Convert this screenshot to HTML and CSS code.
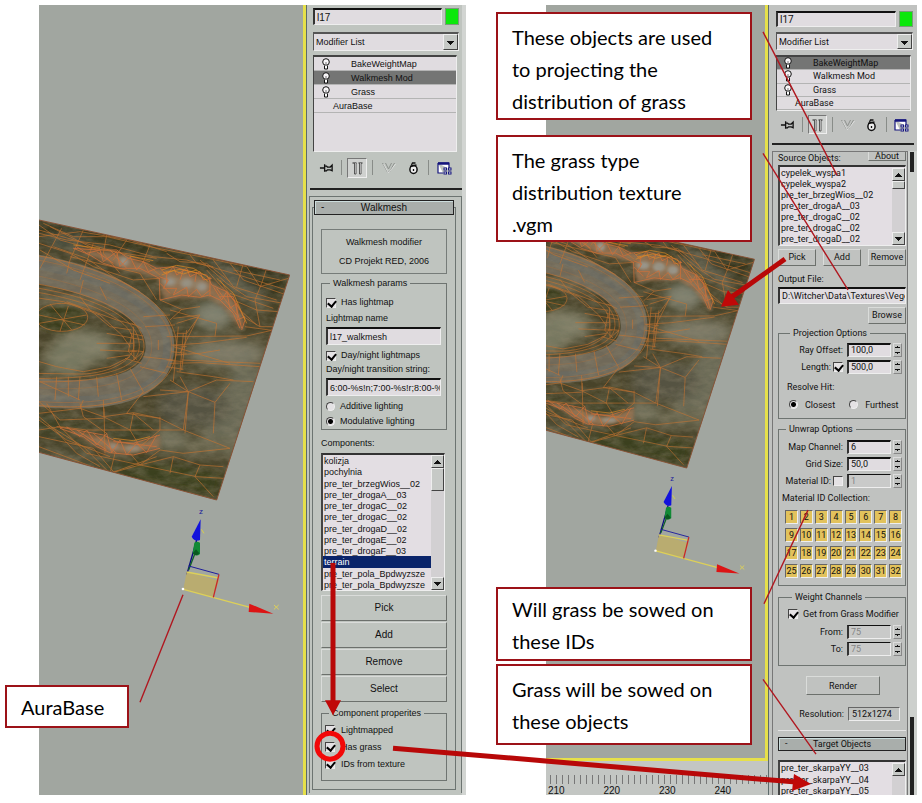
FILE: index.html
```html
<!DOCTYPE html>
<html lang="en">
<head>
<meta charset="utf-8">
<title>Grass modifier setup</title>
<link rel="stylesheet" href="styles.css">
</head>
<body>
<svg class="defs" aria-hidden="true">
  <defs>
    <filter id="soft" x="-40%" y="-40%" width="180%" height="180%"><feGaussianBlur stdDeviation="18"/></filter>
    <filter id="softer" x="-30%" y="-30%" width="160%" height="160%"><feGaussianBlur stdDeviation="6"/></filter>
    <filter id="grain" x="0" y="0" width="100%" height="100%">
      <feTurbulence type="fractalNoise" baseFrequency="0.025 0.05" numOctaves="4" seed="7"/>
      <feColorMatrix values="0 0 0 0 .3  0 0 0 0 .26  0 0 0 0 .17  2 0 0 0 -.6"/>
    </filter>
    <clipPath id="land"><path d="M100 57 L869 225 L650 900 L100 752Z"/></clipPath>
    <symbol id="bulb" viewBox="0 0 10 12">
      <circle cx="5" cy="4" r="3.3" fill="#f8f6f8" stroke="#111"/>
      <path d="M3.5 7.5V11H6.5V7.5" fill="#fff" stroke="#111"/><path d="M5 4V8" stroke="#555" stroke-width=".8"/>
    </symbol>
    <symbol id="pin" viewBox="0 0 16 14"><path d="M1 7H6M6 3V11M6 5H8L9 6H12L14 4V10L12 9H9L8 10H6" fill="none" stroke="#111" stroke-width="1.4"/></symbol>
    <symbol id="tube" viewBox="0 0 14 14"><path d="M2 2H6M8 2H12" stroke="#222" stroke-width="1.2"/><path d="M4 2V13H5.500V2M9 2V13H10.500V2" fill="#fff" stroke="#333" stroke-width=".8"/></symbol>
    <symbol id="unique" viewBox="0 0 14 14"><path d="M1 2L6 11H8L13 2M4 2L7 8L10 2" fill="none" stroke="#8c908c"/><path d="M2 3L7 12L14 3" fill="none" stroke="#eee" stroke-width=".7"/></symbol>
    <symbol id="trash" viewBox="0 0 12 14"><ellipse cx="6" cy="8.500" rx="3.600" ry="4" fill="#eee" stroke="#111" stroke-width="1.500"/><path d="M2.500 5.500L9 4M4 4L5 2H8M6 8V10" fill="none" stroke="#111" stroke-width="1.300"/></symbol>
    <symbol id="sets" viewBox="0 0 15 14"><path d="M1 2H12V8M1 2V12H6" fill="#fff" stroke="#14147c" stroke-width="1.200"/><path d="M1 2.500H12" stroke="#14147c" stroke-width="2.500"/><rect x="7" y="7" width="2.500" height="2" fill="#fff" stroke="#14147c"/><rect x="11.500" y="7" width="2.500" height="2" fill="#fff" stroke="#14147c"/><rect x="7" y="11" width="2.500" height="2" fill="#fff" stroke="#14147c"/><rect x="11.500" y="11" width="2.500" height="2" fill="#fff" stroke="#14147c"/></symbol>

    <g id="scene">
      <g transform="translate(0 200) scale(.33333)">
        <g clip-path="url(#land)">
          <rect x="90" y="50" width="800" height="860" fill="#484329"/>
          <g filter="url(#soft)">
            <path d="M100 50L860 210L840 300L600 190L100 110Z" fill="#36351c"/>
            <ellipse cx="200" cy="125" rx="60" ry="22" fill="#4d5245"/>
            <path d="M640 170L800 300L780 330L660 240Z" fill="#606050"/>
            <ellipse cx="640" cy="345" rx="60" ry="45" fill="#7d8070"/>
            <ellipse cx="680" cy="460" rx="120" ry="42" fill="#7c7966"/>
            <path d="M720 480L800 520L700 780L600 720L640 600Z" fill="#6b6a57"/>
            <ellipse cx="580" cy="620" rx="110" ry="65" fill="#545242"/>
            <ellipse cx="640" cy="740" rx="110" ry="30" fill="#67654d"/>
            <path d="M120 780L500 790L670 820L650 890Z" fill="#3b3f1b"/>
            <ellipse cx="250" cy="440" rx="90" ry="50" fill="#7f7f68"/>
            <ellipse cx="200" cy="480" rx="70" ry="50" fill="#777860"/>
            <ellipse cx="220" cy="310" rx="120" ry="20" fill="#777059"/>
            <path d="M100 640L160 650L300 700L420 660L500 690L440 720L200 720L100 690Z" fill="#3f4228"/>
            <path d="M100 740L260 770L400 790L200 800Z" fill="#585843"/>
            <ellipse cx="510" cy="720" rx="50" ry="36" fill="#70705a"/>
          </g>
          <path d="M100 205C300 240 480 320 480 440C480 560 330 600 100 576" fill="none" stroke="#736c5c" stroke-width="86" opacity=".95"/>
          <path d="M100 195C310 235 500 320 500 440C500 580 340 615 100 592" fill="none" stroke="#676a66" stroke-width="20" opacity=".6"/>
          <ellipse cx="180" cy="356" rx="78" ry="38" fill="#3a3d1a" filter="url(#softer)"/>
          <g filter="url(#softer)" fill="#8e6c4c">
            <path d="M220 145L330 155L400 175L470 205L560 210L625 240L690 280L735 370L725 390L670 320L625 292L490 296L476 235L420 220L360 205Z"/>
            <path d="M180 680L300 708L380 735L440 722L480 705L478 745L380 762L320 758L260 722Z"/>
          </g>
          <g filter="url(#softer)" fill="#99958a"><ellipse cx="372" cy="185" rx="14" ry="14"/><ellipse cx="510" cy="245" rx="20" ry="13"/><ellipse cx="560" cy="250" rx="20" ry="15"/><ellipse cx="605" cy="260" rx="18" ry="14"/><ellipse cx="400" cy="745" rx="25" ry="7"/><ellipse cx="340" cy="740" rx="16" ry="8"/></g>
          <rect x="90" y="50" width="800" height="860" filter="url(#grain)" opacity=".35"/>

          <g fill="none" stroke="#c87430" stroke-width="2.200" opacity=".85">
            <path d="M100 165C320 200 530 300 530 440C530 580 350 640 100 615"/>
            <path d="M100 178C310 212 515 305 515 440C515 568 350 625 100 603" opacity=".6"/>
            <path d="M100 225C290 262 455 330 455 440C455 540 310 580 100 562" opacity=".4"/>
            <path d="M100 250C280 280 432 340 432 440C432 520 300 550 100 545"/>
            <path d="M100 262C270 290 420 345 418 440C415 510 300 538 100 535"/>
            <path d="M100 275C260 300 404 355 402 435C400 490 310 525 230 522L100 520"/>
            <ellipse cx="185" cy="352" rx="78" ry="42"/>
            <path d="M117 345L255 375M150 312L215 390M205 318L180 394M117 370L260 345"/>
            <path d="M100 292L190 305L300 345L365 405L390 440M100 480L170 500L250 515L330 500L390 470M240 290L270 330L330 380L395 390M200 305L350 360L405 375M320 400L430 420M290 430L400 430M300 450L410 455M320 475L390 465"/>
            <path d="M395 370L425 385M390 400L430 408M385 450L432 455M375 475L425 490M400 380L402 480L430 455M395 405L385 455L412 480"/>
            <path d="M117 100L200 120L330 135L460 170L560 180L700 220L860 270M117 130L210 160L280 200L400 240L480 235M130 70L220 110L320 110L450 140L600 170L740 200M117 75L180 120L290 150M185 85L120 205M250 90L210 180L200 220M320 105L310 160L360 220M450 135L430 185L480 225M117 110L240 95L390 120L500 155M160 140L260 175L340 230L420 275M120 150L220 210L330 250M210 170L420 220L470 300M280 130L240 240M380 120L340 180M500 160L540 185L620 190L690 245M117 90L450 185M150 80L280 145L470 175M570 165L590 190L640 200"/>
            <path d="M730 190L710 260M800 205L785 250L765 300L780 380L830 380M690 190L730 240L860 285M640 180L700 260L830 300M600 180L680 250L740 290L850 310M620 210L700 300L770 330L835 335M660 240L720 330L770 375M740 200L780 260L865 235M700 210L840 240M690 280L820 325M735 380L845 395M730 350L780 380"/>
            <path d="M480 300L545 328L600 320M545 328L510 360M520 355L600 345L560 400L530 400M530 370L595 350L540 460M510 330L650 370L645 410M500 410L740 408L820 390M520 435L600 430L740 412M525 465L600 460L660 450M510 490L600 488L780 500M530 515L640 530L700 540M520 440L690 490M550 400L540 515M535 380L520 545M545 480L780 490M560 390L545 510M500 480L550 485M500 500L550 508M515 435L560 440M515 455L560 460"/>
            <path d="M540 530L565 575L645 607L640 700M565 575L430 590M565 575L555 700M565 575L650 540L760 545M480 570L565 575L510 540M645 607L690 550M565 575L550 690L690 745M430 575L380 640L480 655L550 690"/>
            <path d="M117 640L240 625L310 650L400 638L480 655M140 610L180 680M117 605L180 660L310 655M312 625L315 760M240 610L250 650L320 700M400 640L390 690L310 650M117 690L180 680L260 690L330 690L440 690L550 690M390 690L420 740L480 690V650M400 640L460 690M145 675L250 740L330 820M180 680L260 760L420 795L480 750M117 710L280 745L345 820M117 740L330 820L420 795L590 830L670 835M520 770L510 820M600 795L585 830L640 890M420 795L520 770L600 795L670 800M345 760L330 820L470 770M390 760L420 795M117 660L200 720L330 770M250 600L240 625M310 600L312 650M117 650L170 695L230 760L300 800M480 750L550 760L690 745"/>
            <path d="M205 530V590M170 530L165 600M240 530L235 600M290 530L295 590M120 545L240 600M350 520L365 600M390 505L430 575M430 350L510 345M435 380L525 375M430 470L520 480M420 500L500 520M300 260L320 300M250 240L240 280M475 420V450"/>
          </g>
          <g fill="none" stroke="#d0713a" stroke-width="2.600" opacity=".9">
            <path d="M220 145L290 150L350 150L385 175L430 185L470 205L520 200L570 215L620 225L635 255L680 275L710 310L735 360L725 390M220 145L270 165L310 190L360 205L420 205L478 235L480 300L545 285L600 292L628 285L660 300L700 340L720 385"/>
            <path d="M230 140L260 160L300 150L310 185L350 155L360 200L390 170L410 210L430 185L445 215L470 205M290 155L340 190M330 150L380 205M480 205L500 225L520 200L530 225L560 205L570 230L600 215L610 240L635 235M478 230L505 240L490 265L530 265L520 285L560 262L565 290L590 268L605 290L630 270M500 215L500 250M550 210L540 240M590 215L585 245M480 250L510 280M630 230V290M640 260L665 300L680 275L690 325L710 310L712 360L735 350M650 265L710 345M660 290L700 290L725 385"/>
            <path d="M170 680L230 690L310 705L350 725L400 730L480 705M180 685L250 710L290 740L330 758L400 765L480 745M200 680L240 710L260 690L290 735L320 700L335 758L360 720L380 765L410 730L440 758L470 705M230 690L320 750M280 700L350 760M340 725L470 740"/>
          </g>
          <g fill="none" stroke="#e08a24" stroke-width="2.400" opacity=".85"><path d="M485 210L530 196L580 205L630 235M490 218L540 208L590 218L625 245M220 135L300 145M390 168L460 182M650 235L700 280L740 370M340 715L400 722L450 710M485 225L520 212L550 222L590 210"/></g>
        </g>
        <path d="M117 60L869 225L650 900L117 757" fill="none" stroke="#8a5438" stroke-width="3"/>
      </g>
      <g transform="translate(0 490) scale(.33333)">
        <text x="597" y="72" class="axis axis-z">z</text>
        <path d="M560 255L590 150" stroke="#0a0a80" stroke-width="4"/>
        <path d="M566 240L585 190" stroke="#106028" stroke-width="4"/>
        <path d="M578 190L583 158Q590 152 600 158V192Q588 202 578 190Z" fill="#118a35"/>
        <path d="M578 190L588 178L598 190Q588 202 578 190Z" fill="#0a5a20"/>
        <path d="M602 88L575 140Q584 156 600 150Z" fill="#1212dc"/>
        <path d="M604 118L612 130" stroke="#d8d04a" stroke-width="3"/>
        <path d="M560 246L658 272L638 322L550 298Z" fill="#b9ac70"/>
        <path d="M560 246L656 264M550 298L750 352" stroke="#ddd058" stroke-width="4"/>
        <path d="M566 228L657 253" stroke="#1c1c9c" stroke-width="3"/>
        <path d="M657 253L640 322" stroke="#c82828" stroke-width="4"/>
        <path d="M748 341L820 371L746 366Z" fill="#dc1414"/>
        <path d="M822 345L836 358M836 345L822 358" stroke="#ddd058" stroke-width="3"/>
        <circle cx="549" cy="297" r="4" fill="#fff"/>
      </g>
    </g>
  </defs>
</svg>

<main class="board">
  <section class="shot shot-a">
    <div class="viewport">
      <svg class="scene" viewBox="39 5 264 785" role="img" aria-label="Terrain walkmesh"><use href="#scene"/></svg>
    </div>
    <div class="panel">
      <div class="head">
        <div class="name-row"><input class="field" aria-label="Object name" value="l17"><button class="swatch" aria-label="Object color"></button></div>
        <div class="combo"><select aria-label="Modifier List"><option>Modifier List</option></select></div>
        <ul class="stack" role="listbox" aria-label="Modifier stack">
          <li><svg class="bulb"><use href="#bulb"/></svg>BakeWeightMap</li>
          <li class="on"><svg class="bulb"><use href="#bulb"/></svg>Walkmesh Mod</li>
          <li><svg class="bulb"><use href="#bulb"/></svg>Grass</li>
          <li class="base">AuraBase</li>
        </ul>
        <div class="tools">
          <button aria-label="Pin stack"><svg><use href="#pin"/></svg></button><i></i>
          <button class="pressed" aria-label="Show end result"><svg><use href="#tube"/></svg></button><i></i>
          <button aria-label="Make unique"><svg><use href="#unique"/></svg></button>
          <button aria-label="Remove modifier"><svg><use href="#trash"/></svg></button><i></i>
          <button aria-label="Configure sets"><svg><use href="#sets"/></svg></button>
        </div>
      </div>
      <div class="rollout">
        <div class="frame">
          <button class="title"><span>-</span>Walkmesh</button>
          <div class="about"><p>Walkmesh modifier</p><p>CD Projekt RED, 2006</p></div>
          <fieldset class="params">
            <legend>Walkmesh params</legend>
            <label class="line tall"><input type="checkbox" checked>Has lightmap</label>
            <label for="lm">Lightmap name</label>
            <input class="field" id="lm" value="l17_walkmesh">
            <label class="line"><input type="checkbox" checked>Day/night lightmaps</label>
            <label for="dn">Day/night transition string:</label>
            <input class="field" id="dn" value="6:00-%s!n;7:00-%s!r;8:00-%s!d">
            <label class="line radio"><input type="radio" name="light">Additive lighting</label>
            <label class="line radio"><input type="radio" name="light" checked>Modulative lighting</label>
          </fieldset>
          <p class="caption" id="comp">Components:</p>
          <div class="listbox components">
            <ul role="listbox" aria-labelledby="comp">
              <li>kolizja</li><li>pochylnia</li><li>pre_ter_brzegWios__02</li><li>pre_ter_drogaA__03</li><li>pre_ter_drogaC__02</li><li>pre_ter_drogaC__02</li><li>pre_ter_drogaD__02</li><li>pre_ter_drogaE__02</li><li>pre_ter_drogaF__03</li><li class="sel">terrain</li><li>pre_ter_pola_Bpdwyzsze</li><li>pre_ter_pola_Bpdwyzsze</li>
            </ul>
            <div class="scroll"><button class="up" aria-label="Scroll up"></button><span class="thumb"></span><button class="down" aria-label="Scroll down"></button></div>
          </div>
          <div class="actions"><button class="push">Pick</button><button class="push">Add</button><button class="push">Remove</button><button class="push">Select</button></div>
          <fieldset class="props">
            <legend>Component properites</legend>
            <label class="line"><input type="checkbox" checked>Lightmapped</label>
            <label class="line"><input type="checkbox" checked>Has grass</label>
            <label class="line"><input type="checkbox" checked>IDs from texture</label>
          </fieldset>
        </div>
      </div>
    </div>
  </section>

  <section class="shot shot-b">
    <div class="viewport-col">
      <div class="viewport">
        <svg class="scene" viewBox="65 1 236 808" role="img" aria-label="Terrain with grass projection"><use href="#scene"/></svg>
      </div>
      <div class="ruler"><span>210</span><span>220</span><span>230</span><span>240</span></div>
    </div>
    <div class="panel">
      <div class="head">
        <div class="name-row"><input class="field" aria-label="Object name" value="l17"><button class="swatch" aria-label="Object color"></button></div>
        <div class="combo"><select aria-label="Modifier List"><option>Modifier List</option></select></div>
        <ul class="stack" role="listbox" aria-label="Modifier stack">
          <li class="on"><svg class="bulb"><use href="#bulb"/></svg>BakeWeightMap</li>
          <li><svg class="bulb"><use href="#bulb"/></svg>Walkmesh Mod</li>
          <li><svg class="bulb"><use href="#bulb"/></svg>Grass</li>
          <li class="base">AuraBase</li>
        </ul>
        <div class="tools">
          <button aria-label="Pin stack"><svg><use href="#pin"/></svg></button><i></i>
          <button class="pressed" aria-label="Show end result"><svg><use href="#tube"/></svg></button><i></i>
          <button aria-label="Make unique"><svg><use href="#unique"/></svg></button>
          <button aria-label="Remove modifier"><svg><use href="#trash"/></svg></button><i></i>
          <button aria-label="Configure sets"><svg><use href="#sets"/></svg></button>
        </div>
      </div>
      <div class="body">
        <div class="content">
          <div class="source"><span id="src">Source Objects:</span><button class="push">About</button></div>
          <div class="listbox objects">
            <ul role="listbox" aria-labelledby="src"><li>cypelek_wyspa1</li><li>cypelek_wyspa2</li><li>pre_ter_brzegWios__02</li><li>pre_ter_drogaA__03</li><li>pre_ter_drogaC__02</li><li>pre_ter_drogaC__02</li><li>pre_ter_drogaD__02</li></ul>
            <div class="scroll"><button class="up" aria-label="Scroll up"></button><span class="thumb"></span><button class="down" aria-label="Scroll down"></button></div>
          </div>
          <div class="trio"><button class="push">Pick</button><button class="push">Add</button><button class="push">Remove</button></div>
          <label class="out" for="of">Output File:</label>
          <input class="field" id="of" value="D:\Witcher\Data\Textures\Vegetation">
          <button class="push browse">Browse</button>
          <fieldset class="projection">
            <legend>Projection Options</legend>
            <div class="num"><label for="ro">Ray Offset:</label><input class="field" id="ro" value="100,0"><span class="spin"></span></div>
            <div class="num"><label for="len">Length:</label><input type="checkbox" checked aria-label="Use length"><input class="field" id="len" value="500,0"><span class="spin"></span></div>
            <p>Resolve Hit:</p>
            <div class="pair"><label class="line"><input type="radio" name="hit" checked>Closest</label><label class="line"><input type="radio" name="hit">Furthest</label></div>
          </fieldset>
          <fieldset class="unwrap">
            <legend>Unwrap Options</legend>
            <div class="num"><label for="mc">Map Channel:</label><input class="field" id="mc" value="6"><span class="spin"></span></div>
            <div class="num"><label for="gs">Grid Size:</label><input class="field" id="gs" value="50,0"><span class="spin"></span></div>
            <div class="num"><label for="mi">Material ID:</label><input type="checkbox" aria-label="Use material ID"><input class="field" id="mi" value="1" disabled><span class="spin"></span></div>
            <p>Material ID Collection:</p>
            <div class="ids"><button>1</button><button>2</button><button>3</button><button>4</button><button>5</button><button>6</button><button>7</button><button>8</button><button>9</button><button>10</button><button>11</button><button>12</button><button>13</button><button>14</button><button>15</button><button>16</button><button>17</button><button>18</button><button>19</button><button>20</button><button>21</button><button>22</button><button>23</button><button>24</button><button>25</button><button>26</button><button>27</button><button>28</button><button>29</button><button>30</button><button>31</button><button>32</button></div>
          </fieldset>
          <fieldset class="weight">
            <legend>Weight Channels</legend>
            <label class="line"><input type="checkbox" checked>Get from Grass Modifier</label>
            <div class="num"><label for="fr">From:</label><input class="field" id="fr" value="75" disabled><span class="spin"></span></div>
            <div class="num"><label for="to">To:</label><input class="field" id="to" value="75" disabled><span class="spin"></span></div>
          </fieldset>
          <button class="push render">Render</button>
          <div class="resolution"><span>Resolution:</span><output>512x1274</output></div>
          <hr>
          <button class="title"><span>-</span>Target Objects</button>
          <div class="listbox targets">
            <ul role="listbox" aria-label="Target Objects"><li>pre_ter_skarpaYY__03</li><li>pre_ter_skarpaYY__04</li><li>pre_ter_skarpaYY__05</li></ul>
            <div class="scroll"><button class="up" aria-label="Scroll up"></button></div>
          </div>
        </div>
        <div class="track"><span></span><span></span></div>
      </div>
    </div>
  </section>

  <svg class="marks" viewBox="0 0 922 803" preserveAspectRatio="none" aria-hidden="true">
    <g stroke="#b01820" stroke-width="1.400" fill="none">
      <path d="M763 32L837 176M763 154L848 291M764 606L808 512M763 682L816 757M140 705L183 597"/>
    </g>
    <g stroke="#b80808" stroke-width="5">
      <path d="M333 565V706M393 751L796 785M785 260L732 298"/>
    </g>
    <g fill="#c00808"><path d="M325 703H341L333 718Z"/><path d="M794 777L811 787L792 794Z"/><path d="M728 291L739 306L721 308Z"/></g>
    <circle cx="330" cy="749" r="13" fill="none" stroke="#f20808" stroke-width="5"/>
  </svg>
  <p class="note note-objects">These objects are used<br>to projecting the<br>distribution of grass</p>
  <p class="note note-texture">The grass type<br>distribution texture<br>.vgm</p>
  <p class="note note-ids">Will grass be sowed on<br>these IDs</p>
  <p class="note note-sow">Grass will be sowed on<br>these objects</p>
  <p class="note note-base">AuraBase</p>
</main>
</body>
</html>
```
FILE: styles.css
```css
* { box-sizing: border-box; }
body { margin: 0; background: #fff; color: #111; font: 9px/12px "Liberation Sans", sans-serif; }
p, ul, fieldset, legend, hr { margin: 0; padding: 0; }
ul { list-style: none; }
button, input, select { font: inherit; color: inherit; margin: 0; padding: 0; border-radius: 0; }
.defs { position: absolute; width: 0; height: 0; }

.board { position: relative; display: flex; gap: 80px; padding: 5px 5px 5px 39px; }
.shot { display: flex; min-width: 0; }
.shot-a { flex: 427 1 0; }
.shot-b { flex: 371 1 0; font-family: Roboto, "Liberation Sans", sans-serif; }
.viewport { flex: 1; min-width: 0; background: #a1a6a0; border-right: 3px solid #e6e04a; }
.scene { display: block; width: 100%; height: auto; }
.axis { font: 24px "Liberation Sans", sans-serif; }
.axis-z { fill: #1c1c9c; }
.viewport-col { flex: 1; min-width: 0; display: flex; flex-direction: column; }
.shot-b .viewport { border-bottom: 3px solid #e6e04a; }
.ruler {
  height: 34px; padding-top: 24px; display: flex; overflow: hidden;
  font: 10px/12px "Liberation Sans", sans-serif;
  background: repeating-linear-gradient(90deg, #777 0 1px, transparent 1px 6px) 4px 14px / 100% 9px no-repeat, #c3c6c3;
}
.ruler span { width: 56px; padding-left: 2px; }

/* Command panels */
.panel { width: 160px; flex: none; background: #bfc4bf; border-left: 1px solid #5d6b6b; border-right: 4px solid #d2d5d2; }
.shot-b .panel { width: 149px; background: #c0c2c0; border-right: 0; }
.head { display: flex; flex-direction: column; height: 185px; margin-left: 3px; padding: 3px; border-bottom: 2px solid #222; }
.shot-b .head { height: 140px; margin: 0 3px; padding: 6px 1px 0 4px; }
.name-row { display: flex; gap: 3px; height: 17px; }
.field {
  width: 100%; min-width: 0; height: 18px; padding-left: 2px; outline: 0;
  background: #e0dce0; border: 1px solid #eee; border-top: 2px solid #111; border-left: 2px solid #333;
}
.field:disabled { color: #858585; background: #c9cac9; border-top-width: 1px; }
.name-row .field { height: 17px; font-size: 10px; }
.shot-b .name-row, .shot-b .name-row .field { height: 16px; }
.swatch { flex: none; width: 14px; background: #0be80b; border: 1px solid #7a9a7a; }
.combo { position: relative; margin-top: 7px; height: 19px; }
.shot-b .combo { margin-top: 5px; height: 18px; }
.combo select { appearance: none; width: 100%; height: 100%; background: #e0dce0; border: 1px solid #eee; border-top: 2px solid #555; border-left: 1px solid #555; padding-left: 2px; outline: 0; }
.combo::after {
  content: ""; position: absolute; right: 1px; top: 2px; bottom: 1px; width: 13px; pointer-events: none;
  border: 1px solid; border-color: #eee #444 #444 #eee;
  background: linear-gradient(#111, #111) 50% 6px / 7px 1px no-repeat, linear-gradient(#111, #111) 50% 7px / 5px 1px no-repeat, linear-gradient(#111, #111) 50% 8px / 3px 1px no-repeat, linear-gradient(#111, #111) 50% 9px / 1px 1px no-repeat, #c6c9c6;
}
.stack { margin: 4px 2px 0 0; height: 97px; background: #e0dce0; border: 1px solid #eee; border-top: 2px solid #444; border-left: 1px solid #444; }
.stack li { height: 14px; line-height: 14px; display: flex; align-items: center; padding-left: 7px; border-bottom: 1px solid #b4b4b4; }
.stack li.on { background: #747574; }
.stack .base { padding-left: 19px; }
.bulb { width: 10px; height: 12px; margin-right: 20px; flex: none; }
.shot-b .stack { display: grid; grid-auto-rows: 1fr; height: 56px; margin-top: 5px; }
.shot-b .stack li { height: auto; padding-left: 6px; line-height: 12px; }
.shot-b .stack .base { padding-left: 18px; }
.tools { display: flex; align-items: center; margin-top: 5px; height: 21px; gap: 5px; padding-left: 3px; }
.tools button { border: 1px solid transparent; background: none; width: 20px; height: 20px; display: flex; align-items: center; justify-content: center; }
.tools svg { width: 15px; height: 14px; }
.tools i { width: 1px; height: 15px; background: #888c88; }
.tools .pressed { border-color: #777 #eee #eee #777; background: #cfd1cf; }
.shot-b .tools { padding-left: 2px; margin-top: 3px; }
.shot-b .tools button { width: 19px; height: 19px; }

/* Shared controls */
.push { background: none; border: 1px solid; border-color: #dadcda #6c706c #6c706c #dadcda; }
.title { display: block; position: relative; width: 100%; height: 15px; border: 1px solid #222; background: #a9aeab; box-shadow: inset 1px 1px #cdd; line-height: 12px; text-align: center; }
.title span { position: absolute; left: 6px; top: 0; }
fieldset { border: 1px solid #6e7471; min-width: 0; }
legend { margin-left: 4px; padding: 0 3px; line-height: 12px; }
label.line { display: flex; align-items: center; gap: 5px; white-space: nowrap; height: 15px; }
input[type=checkbox], input[type=radio] { appearance: none; flex: none; width: 10px; height: 10px; background: #e4e2e4; border: 1px solid; border-color: #444 #eee #eee #444; position: relative; }
input[type=checkbox]:checked::after { content: ""; position: absolute; left: 2px; top: 0; width: 4px; height: 6px; border: solid #000; border-width: 0 2px 2px 0; transform: rotate(40deg); }
input[type=radio] { width: 9px; height: 9px; border-radius: 50%; }
input[type=radio]:checked { background: radial-gradient(#000 0 2px, #e4e2e4 3px); }
.listbox { display: flex; background: #e3dee3; border: 1px solid #eee; border-top: 2px solid #333; border-left: 2px solid #444; }
.listbox ul { flex: 1; min-width: 0; display: grid; grid-auto-rows: 1fr; overflow: hidden; }
.listbox li { min-height: 0; line-height: 12px; padding-left: 1px; white-space: nowrap; overflow: hidden; }
.listbox .sel { background: #0a246a; color: #fff; }
.scroll { width: 13px; flex: none; display: flex; flex-direction: column; background: #d2d0d2; }
.scroll button, .thumb { height: 13px; border: 1px solid; border-color: #eee #444 #444 #eee; background: #c6c9c6; flex: none; }
.scroll .up { background: linear-gradient(#111, #111) 50% 4px / 1px 1px no-repeat, linear-gradient(#111, #111) 50% 5px / 3px 1px no-repeat, linear-gradient(#111, #111) 50% 6px / 5px 1px no-repeat, linear-gradient(#111, #111) 50% 7px / 7px 1px no-repeat, #c6c9c6; }
.scroll .down { margin-top: auto; background: linear-gradient(#111, #111) 50% 4px / 7px 1px no-repeat, linear-gradient(#111, #111) 50% 5px / 5px 1px no-repeat, linear-gradient(#111, #111) 50% 6px / 3px 1px no-repeat, linear-gradient(#111, #111) 50% 7px / 1px 1px no-repeat, #c6c9c6; }
.thumb { height: 23px; }

/* Walkmesh rollout */
.rollout { margin: 6px 0 0 2px; border: 1px solid #6c7471; border-bottom: 0; padding: 10px 5px 3px 2px; }
.frame { border: 1px solid #6c7471; padding: 0 8px 8px; }
.frame .title { margin: -8px -7px 0; width: calc(100% + 14px); font-size: 10px; }
.about { border: 1px solid #767c79; margin-top: 14px; padding: 6px 0; text-align: center; display: grid; gap: 7px; }
.params { margin-top: 3px; padding: 4px 5px 0 4px; display: flex; flex-direction: column; }
.params label { line-height: 13px; }
.params label.tall { height: 19px; }
.params .field { margin: 2px 0 3px; }
.caption { margin: 7px 0 4px; }
.components { height: 138px; margin-right: 2px; }
.actions { display: grid; grid-auto-rows: 26px; gap: 1px; margin-top: 4px; }
.actions button { font-size: 10px; }
.props { margin-top: 5px; padding: 2px 5px 8px 3px; }
.props label.line { height: 17px; gap: 6px; }

/* Projection rollout */
.body { display: flex; margin: 6px 0 0 3px; height: 644px; overflow: hidden; }
.content { flex: 1; min-width: 0; display: flex; flex-direction: column; border: 1px solid #777; border-bottom: 0; padding: 0 1px 0 5px; }
.content > * { flex: none; }
.track { width: 9px; flex: none; display: flex; flex-direction: column; justify-content: space-between; padding: 1px 3px 0 2px; background: #cdd0cd; }
.track span { background: #222; height: 20px; }
.track span:last-child { height: 78px; }
.source { display: flex; justify-content: space-between; height: 13px; }
.source .push { width: 38px; height: 9px; line-height: 6px; border-top: 0; }
.objects { height: 81px; padding-top: 1px; }
.objects li, .targets li { line-height: 11px; }
.objects .thumb { height: 8px; }
.trio { display: flex; justify-content: space-between; margin-top: 3px; }
.trio .push, .browse { width: 38px; height: 17px; line-height: 13px; white-space: nowrap; }
.out { margin-top: 7px; height: 14px; }
.content > .field { height: 17px; }
.browse { align-self: flex-end; margin-top: 3px; }
.projection { margin-top: 3px; padding: 2px 3px 6px 7px; }
.num { display: flex; align-items: center; justify-content: flex-end; gap: 2px; height: 17px; white-space: nowrap; }
.num .field { width: 44px; height: 14px; flex: none; line-height: 10px; margin-left: 2px; }
.spin {
  width: 9px; height: 14px; border: 1px solid; border-color: #ddd #888 #888 #ddd;
  background: linear-gradient(#111, #111) 50% 2px / 1px 1px no-repeat, linear-gradient(#111, #111) 50% 3px / 5px 1px no-repeat, linear-gradient(#111, #111) 50% 8px / 5px 1px no-repeat, linear-gradient(#111, #111) 50% 9px / 1px 1px no-repeat;
}
.projection p { margin-top: 6px; height: 14px; padding-left: 1px; }
.pair { display: flex; gap: 14px; padding: 2px 0 0 3px; }
.pair label.line { gap: 7px; }
.unwrap { margin-top: 4px; padding: 3px 3px 7px 3px; }
.unwrap p { height: 21px; line-height: 19px; }
.ids { display: grid; grid-template-columns: repeat(8, 1fr); gap: 4px 2px; padding: 0 0 0 3px; }
.ids button { height: 14px; line-height: 11px; background: #e2c25c; border: 1px solid; border-color: #666 #eee #eee #666; text-align: center; }
.weight { margin-top: 5px; padding: 2px 3px 8px 9px; }
.weight label.line { height: 18px; }
.render { width: 74px; height: 19px; margin: 10px auto 0 28px; }
.resolution { display: flex; justify-content: flex-end; align-items: center; gap: 4px; padding-right: 6px; margin-top: 12px; }
.resolution output { width: 52px; height: 14px; line-height: 12px; border: 1px solid; border-color: #666 #eee #eee #666; padding-left: 3px; }
hr { border: 0; border-top: 1px solid #e4e4e4; margin: 9px 0 6px; }
.content .title { height: 14px; line-height: 11px; }
.targets { height: 38px; margin-top: 9px; border-bottom: 0; padding-top: 1px; }

/* Callouts over the captures */
.marks { position: absolute; inset: 0; width: 100%; height: 100%; pointer-events: none; }
.note { position: absolute; background: #fff; border: 2px solid #9c1218; padding: 7px 14px; color: #000; font: 20px/32px Lato, "Noto Sans", sans-serif; white-space: nowrap; }
.note-objects { left: 496px; top: 12px; width: 256px; height: 108px; }
.note-texture { left: 496px; top: 135px; width: 256px; height: 107px; }
.note-ids { left: 496px; top: 587px; width: 256px; height: 74px; padding-top: 4px; }
.note-sow { left: 496px; top: 664px; width: 256px; height: 81px; }
.note-base { left: 5px; top: 685px; width: 124px; height: 43px; padding-top: 4px; }
```
